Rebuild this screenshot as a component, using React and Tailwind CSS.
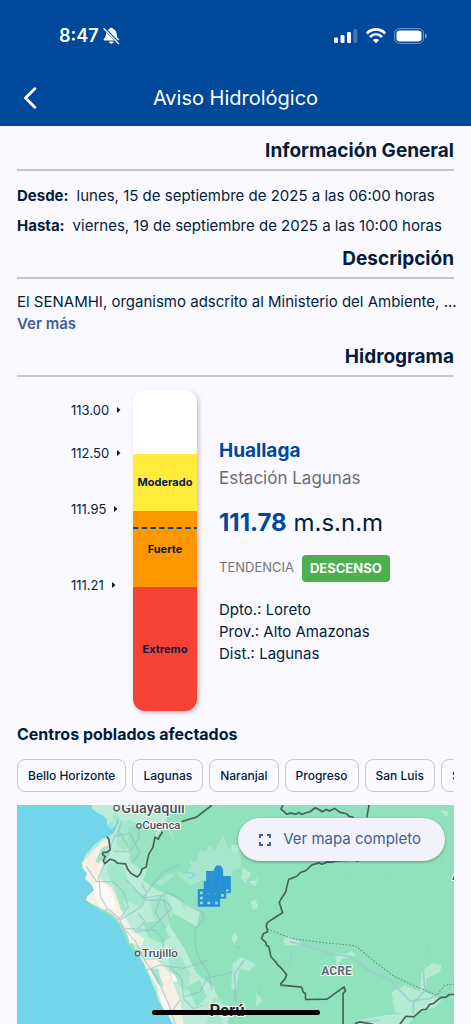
import React from "react";

const levels = [
  { value: "113.00", gap: "" },
  { value: "112.50", gap: "mt-[23px]" },
  { value: "111.95", gap: "mt-9" },
  { value: "111.21", gap: "mt-14" },
];

const towns = ["Bello Horizonte", "Lagunas", "Naranjal", "Progreso", "San Luis", "Santa Cruz"];

function StatusBar() {
  return (
    <div className="flex h-[70px] items-center justify-between pt-0.5 pr-11 pl-[59px]">
      <div className="flex items-center gap-1">
        <span className="text-[18px] leading-6 font-semibold">8:47</span>
        <svg width="17" height="18" viewBox="0 0 17 18" aria-hidden="true">
          <path
            d="M8.300.7c1 0 1.700.6 1.800 1.300 2.300.7 3.500 2.600 3.600 5.200.1 2.400.7 3.300 2 4.500.600.600.400 1.700-.600 1.700H1.500c-1 0-1.200-1.100-.600-1.700 1.300-1.200 1.900-2.100 2-4.500.1-2.600 1.300-4.500 3.600-5.200C6.600 1.300 7.300.7 8.300.7ZM5.900 14.600h4.800c-.2 1.300-1.200 2.100-2.400 2.100s-2.200-.8-2.400-2.100Z"
            fill="#fff"
          />
          <path d="M1.300 1.600 16 16.600" stroke="#00489a" strokeWidth="2.800" />
          <path d="M1 1.800 15.700 16.800" stroke="#fff" strokeWidth="1.300" strokeLinecap="round" />
        </svg>
      </div>
      <div className="flex items-center gap-2">
        <svg width="24" height="16" viewBox="0 0 24 16" fill="#fff" aria-hidden="true">
          <rect x="0" y="9.500" width="4" height="5.500" rx="1.200" />
          <rect x="6.500" y="7" width="4" height="8" rx="1.200" />
          <rect x="13" y="4" width="4" height="11" rx="1.200" />
          <rect x="19.300" y="1" width="4" height="14" rx="1.200" opacity=".25" />
        </svg>
        <svg width="20" height="16" viewBox="0 0 20 16" fill="none" aria-hidden="true">
          <path d="M.8 5.500C6-.100 14-.100 19.200 5.500" stroke="#fff" strokeWidth="2.700" />
          <path d="M4 9c3.400-3.600 8.600-3.600 12 0" stroke="#fff" strokeWidth="2.600" />
          <path d="M6.900 12c1.800-1.800 4.400-1.800 6.200 0L10 15.200Z" fill="#fff" />
        </svg>
        <svg width="33" height="16" viewBox="0 0 33 16" aria-hidden="true">
          <rect x=".6" y=".6" width="28.800" height="14.800" rx="4.800" fill="none" stroke="#fff" strokeOpacity=".45" />
          <rect x="2.500" y="2.500" width="25" height="11" rx="3.200" fill="#fff" />
          <path d="M31 5.500c1.300.4 1.700 1.400 1.700 2.500s-.4 2.100-1.700 2.500Z" fill="#fff" opacity=".5" />
        </svg>
      </div>
    </div>
  );
}

function SectionTitle({ children }) {
  return (
    <h2 className="border-b-2 border-[#c4c6d1] pb-1 text-right text-[19px] leading-7 font-bold">
      {children}
    </h2>
  );
}

function Gauge() {
  return (
    <div className="relative flex w-16 shrink-0 flex-col overflow-hidden rounded-xl bg-white text-center text-[11px] font-bold shadow-[2px_2px_4px_rgba(0,0,0,0.22)]">
      <div className="h-16" />
      <div className="flex h-[57px] items-center justify-center bg-[#ffeb3b]">Moderado</div>
      <div className="flex h-[76px] items-center justify-center bg-[#ff9800]">Fuerte</div>
      <div className="flex h-[124px] items-center justify-center bg-[#f44336]">Extremo</div>
      <svg className="absolute top-[137px] left-0 h-0.5 w-full" aria-hidden="true">
        <line x1="0" y1="1" x2="100%" y2="1" stroke="#00489a" strokeWidth="2" strokeDasharray="5.500 3.200" />
      </svg>
    </div>
  );
}

function RegionMap() {
  return (
    <svg
      className="absolute inset-0 h-full w-full"
      viewBox="52 15 1308 657"
      preserveAspectRatio="xMidYMid slice"
      role="img"
      aria-label="Mapa"
    >
      <rect x="0" y="0" width="1420" height="700" fill="#90e1bd" />
      {/* coastal highlands */}
      <path
        d="M280 0 490 0 500 60 470 110 450 180 430 240 470 270 520 290 560 310 600 335 590 380 540 350 500 330 510 380 550 440 590 520 640 560 660 610 700 620 680 672 500 672 430 480 350 350 250 200Z"
        fill="#baecd8"
      />
      <path d="M355 80q30-40 60 0l-12 45-30 30-25-20ZM320 200q30-30 50 0l20 60 50 30-20 30-50-20-40-60ZM450 300l50-20 20 60-30 60-30-50ZM500 440l30 10 40 70-10 60-50-60Z" fill="#a3e6ca" />
      <path d="M385 85l90-20-20 110-25 40-40-30ZM430 370l50-10 30 50-25 20-40-20ZM560 560l40-20 20 50-30 30Z" fill="#90e1bd" opacity=".8" />
      <path d="M528 215l28 6 18-22-8-18 22 4 12-35 14 8 16-22 14 16 25-45 15 40 38-5v60l-22 8-12 40-20-16-26 20-32-14-38 16-30-22Z" fill="#a6e6cc" />
      <path d="M500 60l15 35 8 30-14-25ZM460 250l50-30 15 5-40 30ZM545 300l15 10v20l-12-8ZM640 590l30 10-20 30 20 42h-50Z" fill="#a6e6cc" />
      {/* coastal desert */}
      <path
        d="M320 110 332 150 312 180 300 235 335 262 360 310 372 345 400 395 433 415 425 440 400 430 430 480 470 480 505 510 540 600 550 672 500 672 470 560 420 470 370 380 340 345 255 300 240 195Z"
        fill="#f5efe4"
      />
      <path d="M300 245 335 270 350 330 300 320 275 260ZM380 395l20 10 5 20-15 5ZM510 515l15 10 8 18-14 0ZM475 575l25 20 10 50-15-5Z" fill="#fdfaf5" />
      <path d="M305 145l20-10 5 30-20 10-12 15-12-3ZM450 505l25 0 5 25 12 30-20-10ZM335 225l20 40 25 60-15 10-12-35Z" fill="#a3e6ca" />
      {/* ocean */}
      <path
        d="M0 0H278L275 28 298 42 310 47 322 60 321 75 333 87 343 80 358 48 356 70 341 102 322 110 304 118 280 138 258 165 246 185 249 206 261 220 256 236 278 258 282 271 263 288 258 300 275 316 298 331 326 344 348 364 362 384 375 408 381 428 399 451 414 470 432 492 434 510 449 530 456 552 467 575 473 596 486 620 503 641 512 660 520 672V700H0Z"
        fill="#72d5ea"
      />
      <path d="M338 48l12-8 8 14-14 12ZM325 70l20-12-8 30-10-4Z" fill="#a3e6ca" />
      {/* roads */}
      <g fill="none" stroke="#90b8cc" strokeWidth="4" strokeLinejoin="round" opacity=".55">
        <path d="M365 60q-5 30-25 60l-25 70-18 40 5 60 20 35 35 30 15 30 35 40 30 60 35 50 35 80 20 60" />
        <path d="M260 200l30 45h50l30 30 15 45-20 30-15 10M340 155l50 0 25-35 5-50M340 110l50-10 30 60-25 30M355 90l35 60M425 250l15 30-15 40-65 40M380 240l50 55 55-10-20 50 30 50M375 385l75 5 40-40 25-25-20-25-60 0M405 395l60-5 25 30v40M430 290l60-75 45-18M490 290q0-20 30-5l50 35 40 20v20l-25 25v45l5 30 35 60 10 50M440 510l40-15 70 10 75-25M510 500l35 35 5 55 50-15 20-40 80-20 20-30M550 595l30 30 30-10M540 600l-30 40M705 510v90M490 300l20 60M415 340l20 25-20 20" />
      </g>
      {/* lakes and rivers */}
      <g stroke="#72d5ea" strokeWidth="3" fill="none">
        <path d="M555 216l22 4 10 6M708 442h12M580 228l-12 8M290 320l6 4M315 330l8 3M695 335l8 2" />
      </g>
      {/* borders of the north-west */}
      <path
        d="M321 110 327 119 331 150 322 157 309 158 308 164 316 170 310 183 315 191 331 178 343 182 354 190 377 192 383 207 393 220 412 231 421 222 426 207 439 201 442 183 447 162 459 142 465 112 475 118 479 109 488 96M545 65 589 52 636 16"
        fill="none"
        stroke="#44625b"
        strokeWidth="5"
        strokeLinejoin="round"
      />
      <g transform="translate(693 0)">
        <path d="M0 135l18 0 10 15-22 12ZM35 205l25 15-18 30-12-15ZM58 305l15-5 8 20-15 10ZM52 245l30-12-10 28ZM0 410l12-12 8 15-12 22ZM5 490l25-18 28 12 15 10-18 18-30-5-10 60H0ZM75 575l20 25-20 20ZM155 418l15-10 40 20-10 8-40-2ZM310 460l35 2 15-10 12 15-40 10-15 20ZM480 575l40-20 45 20 5-60 30-25 30 5-5 20-40 20-5 40 50 25-20 20-70 25-50-10ZM380 660l80-15 60-5 20-20 20 20-30 32H380ZM620 30l30 5-5 15Z" fill="#b3ebd4" />
        <path d="M15 610l-5-90 30-40M175 425q70 15 125 38l55 5 60 45 60 25 60 65 60-8 70-35M575 510l5 60-35 40v30M385 665l60-5" fill="none" stroke="#9cc8ce" strokeWidth="5" opacity=".8" />
        <path d="M335 235l22-22M450 255l20-28M620 212l12-30M432 347h12M348 418l20-5M580 470l12-33M255 590l22-20M280 610l18-12M175 510l5-60M90 560l-10 30M15 440h20M40 240h40M628 70l12-12" stroke="#79d8df" strokeWidth="3" fill="none" opacity=".7" />
        <path
          d="M155 16 149 28 160 37 166 43 178 40 195 43 202 38 210 44 224 39 236 36 252 24 264 30 272 36 285 29 294 34 310 26 326 38 346 42 352 49 367 53M413 15 406 53M382 184 365 180 315 183 300 187 288 186 272 193 263 189 242 195 222 213 209 217 196 229 172 239 163 276 149 298 144 307 154 338 129 354 109 367 105 376 109 395 96 401 91 416 103 426 106 436 113 440 119 470 133 485 139 494 151 505 166 524 161 537 148 551 149 555 211 561 216 577 222 579 223 598 287 597 338 560 342 572 335 580 335 672M505 672 523 648 547 650 570 629 584 627 594 613 605 610 627 592 643 591 653 583 672 583M370 670 385 665 425 672"
          fill="none"
          stroke="#44625b"
          strokeWidth="5"
          strokeLinejoin="round"
        />
        <path d="M109 387 180 415 280 428 372 437 430 485 490 530 560 562 615 585 640 555 672 552" fill="none" stroke="#5f8f80" strokeWidth="3" strokeDasharray="5 5" />
      </g>
      {/* affected area */}
      <path
        d="M618 213H641Q643 196 655 196T669 213V228H692V279H678V296H660V320H593V267H611V244H618Z"
        fill="#2890d4"
      />
      <g fill="#9be0d0">
        <path d="M600 275h8v8h-8ZM600 290h8v8h-8ZM600 305h8v8h-8ZM622 305h8v8h-8ZM645 305h8v8h-8ZM663 282h8v8h-8ZM678 268h7v7h-7Z" />
      </g>
      <path d="M622 282h7M641 282h7M634 220h3M634 252h3M655 232h3M657 252h3M678 240h3" stroke="#55add9" strokeWidth="3" />
      {/* place names */}
      <g fontFamily="Roboto, sans-serif" fill="#494e55" stroke="#fff" strokeWidth="6" strokeLinejoin="round" paintOrder="stroke" fontWeight="500">
        <text x="364" y="39" fontSize="43">Guayaquil</text>
        <text x="427" y="87" fontSize="34">Cuenca</text>
        <text x="426" y="471" fontSize="35">Trujillo</text>
        <text x="963" y="525" fontSize="36" fill="#5f6a70" fontWeight="700">ACRE</text>
        <text x="628" y="647" fontSize="50" fill="#24292c" fontWeight="700">Perú</text>
        <text x="1354" y="241" fontSize="35">A</text>
      </g>
      <g fill="#fff" stroke="#555d61" strokeWidth="4">
        <circle cx="350" cy="25" r="8" />
        <circle cx="417" cy="78" r="6.500" />
        <circle cx="413" cy="460" r="6.500" />
      </g>
    </svg>
  );
}

export default function App() {
  return (
    <div className="relative flex min-h-screen flex-col bg-[#faf9ff] font-['Inter',sans-serif] text-[#041c3c]">
      <header className="bg-[#00489a] text-white">
        <StatusBar />
        <div className="grid h-14 grid-cols-[48px_1fr_48px] items-center">
          <button type="button" aria-label="Volver" className="flex h-12 items-center justify-end pr-2.5">
            <svg width="16" height="22" viewBox="0 0 16 22" fill="none" aria-hidden="true">
              <path d="M12.800 1.800 3.500 11l9.300 9.200" stroke="#fff" strokeWidth="2.800" strokeLinecap="round" strokeLinejoin="round" />
            </svg>
          </button>
          <h1 className="text-center text-[20px] leading-7 font-normal">Aviso Hidrológico</h1>
        </div>
      </header>

      <main className="flex flex-1 flex-col px-[17px] pt-[11px]">
        <section>
          <SectionTitle>Información General</SectionTitle>
          <dl className="mt-2.5 text-[15px] leading-[30px]">
            <div className="flex gap-2">
              <dt className="font-bold">Desde:</dt>
              <dd className="whitespace-nowrap">lunes, 15 de septiembre de 2025 a las 06:00 horas</dd>
            </div>
            <div className="flex gap-2">
              <dt className="font-bold">Hasta:</dt>
              <dd className="whitespace-nowrap">viernes, 19 de septiembre de 2025 a las 10:00 horas</dd>
            </div>
          </dl>
        </section>

        <section className="mt-1">
          <SectionTitle>Descripción</SectionTitle>
          <div className="mt-3 text-[15px] leading-[22px]">
            <p className="whitespace-nowrap">El SENAMHI, organismo adscrito al Ministerio del Ambiente, ...</p>
            <button type="button" className="block font-semibold text-[#415e97]">Ver más</button>
          </div>
        </section>

        <section className="mt-2">
          <SectionTitle>Hidrograma</SectionTitle>
          <div className="mt-[13px] flex">
            <ul className="w-[116px] shrink-0 pt-2.5 pl-[54px] text-[13px] leading-5">
              {levels.map((level) => (
                <li key={level.value} className={`flex items-center gap-2 ${level.gap}`}>
                  {level.value}
                  <svg width="4" height="6" viewBox="0 0 4 6" aria-hidden="true">
                    <path d="M0 0 3.500 3 0 6Z" fill="#041c3c" />
                  </svg>
                </li>
              ))}
            </ul>
            <Gauge />
            <div className="ml-[22px] self-center">
              <h3 className="text-[19px] leading-7 font-bold text-[#00489a]">Huallaga</h3>
              <p className="text-[17px] leading-[26px] text-[#6d6d70]">Estación Lagunas</p>
              <p className="mt-3.5 text-[24px] leading-9">
                <strong className="font-bold text-[#00489a]">111.78</strong> m.s.n.m
              </p>
              <div className="mt-3.5 flex items-center gap-2 text-[13px]">
                <span className="text-[#757575]">TENDENCIA</span>
                <span className="rounded bg-[#4caf50] px-2 text-[13px] leading-[27px] font-bold text-white">DESCENSO</span>
              </div>
              <div className="mt-[17px] text-[15px] leading-[22px]">
                <p>Dpto.: Loreto</p>
                <p>Prov.: Alto Amazonas</p>
                <p>Dist.: Lagunas</p>
              </div>
            </div>
          </div>
        </section>

        <section className="mt-[11px] flex flex-1 flex-col">
          <h2 className="text-[16px] leading-6 font-bold">Centros poblados afectados</h2>
          <ul className="mt-[13px] flex gap-1.5 overflow-hidden">
            {towns.map((town) => (
              <li
                key={town}
                className="shrink-0 rounded-lg border border-[#c4c6d1] px-2.5 text-[12px] leading-[31px] font-medium whitespace-nowrap"
              >
                {town}
              </li>
            ))}
          </ul>
          <div className="relative mt-[13px] min-h-[219px] flex-1 overflow-hidden">
            <RegionMap />
            <button
              type="button"
              className="absolute top-[13px] right-[9px] flex h-[43px] items-center gap-[11px] rounded-full bg-[#f2f3fa] pr-6 pl-5 text-[15px] text-[#415e97] shadow-[0_1px_3px_rgba(0,0,0,0.35)]"
            >
              <svg width="14" height="14" viewBox="0 0 14 14" fill="none" stroke="#415e97" strokeWidth="2" aria-hidden="true">
                <path d="M2 5V2h3M9 2h3v3M12 9v3H9M5 12H2V9" />
              </svg>
              Ver mapa completo
            </button>
          </div>
        </section>
      </main>
      <div className="absolute bottom-[9px] left-1/2 h-[5px] w-[168px] -translate-x-1/2 rounded-full bg-black" />
    </div>
  );
}
